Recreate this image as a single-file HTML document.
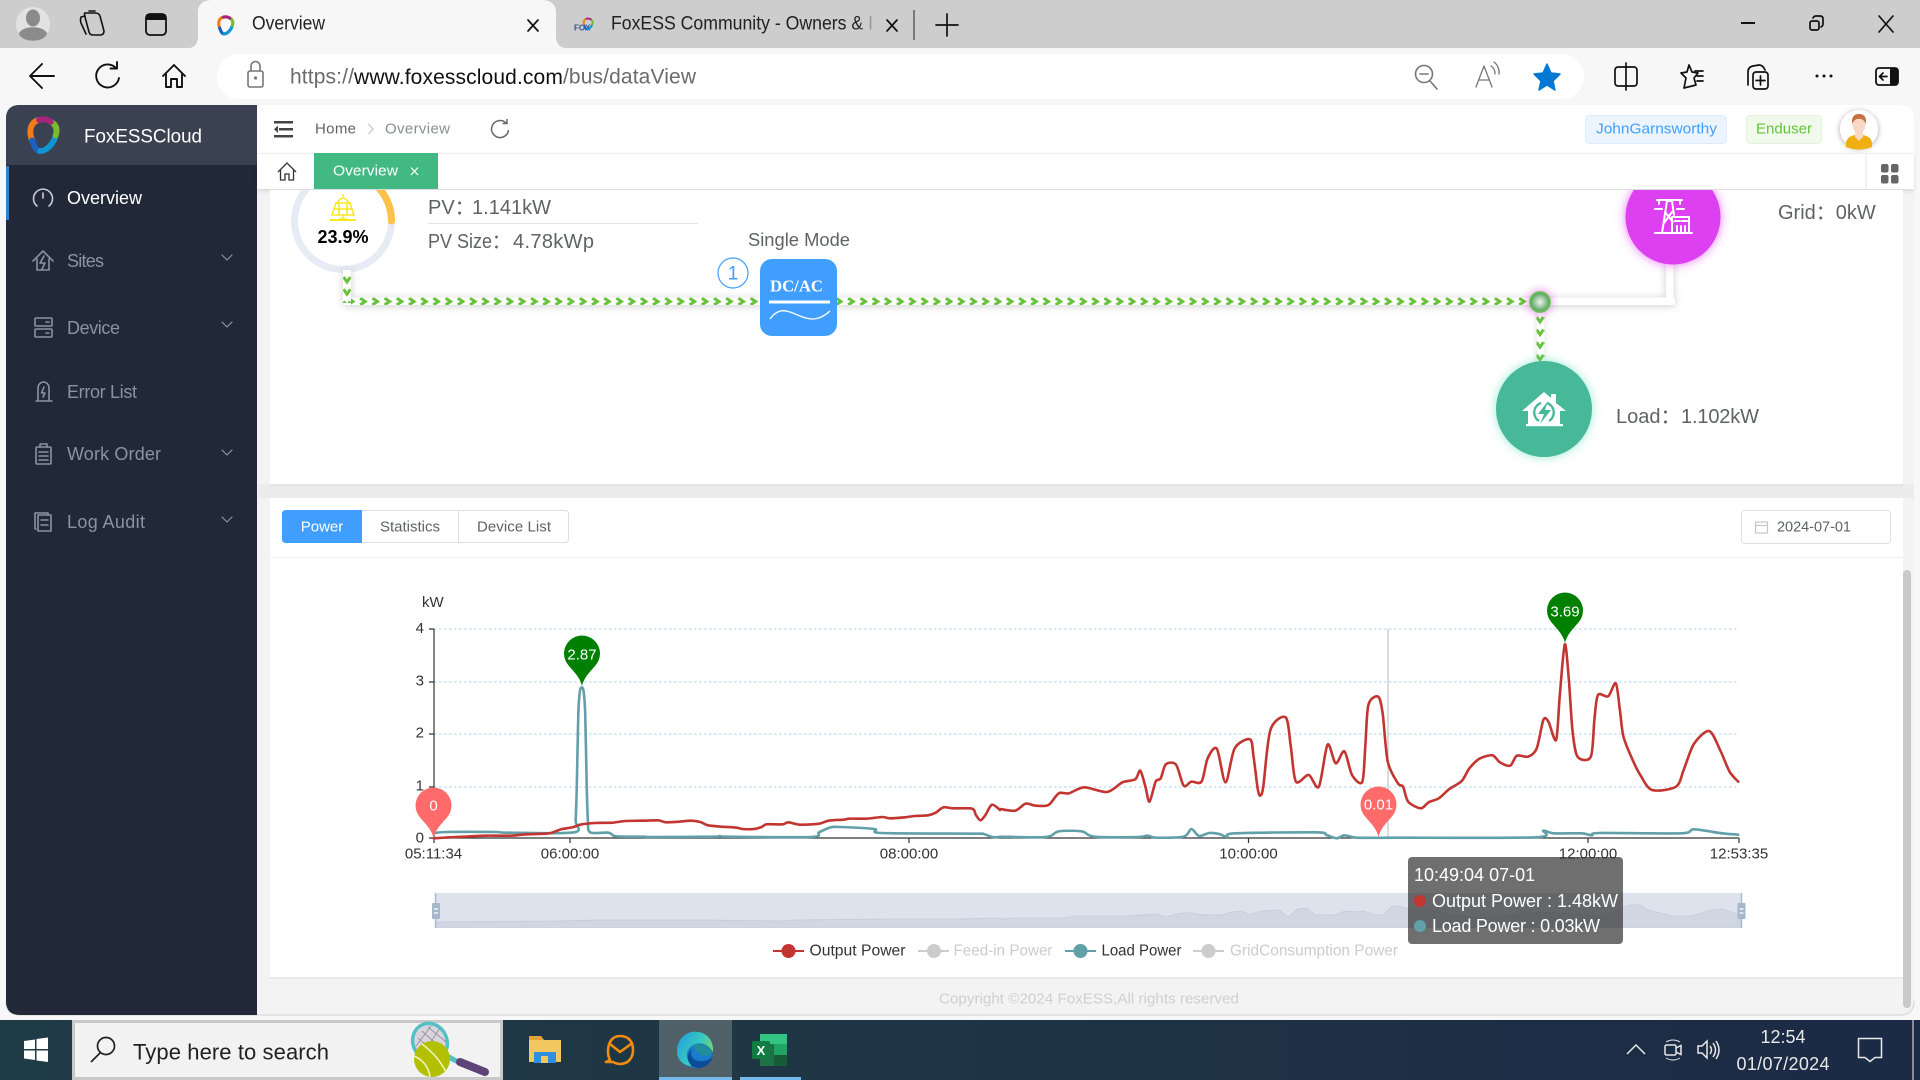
<!DOCTYPE html>
<html lang="en"><head><meta charset="utf-8"><title>Overview</title>
<style>
html,body{margin:0;padding:0;width:1920px;height:1080px;overflow:hidden;background:#f7f7f7}
svg{display:block;position:absolute;left:0;top:0}
text{font-family:"Liberation Sans","Noto Sans CJK SC",sans-serif;dominant-baseline:central;white-space:pre}
.m{fill:#8a93a0;font-size:18px}
.i{fill:none;stroke:#8a93a0;stroke-width:1.6;stroke-linejoin:round;stroke-linecap:round}
.b{fill:none;stroke:#111;stroke-width:1.7;stroke-linejoin:round;stroke-linecap:round}
.g{fill:none;stroke:#777;stroke-width:1.6;stroke-linejoin:round;stroke-linecap:round}
.w{fill:none;stroke:#fff;stroke-width:1.8;stroke-linejoin:round;stroke-linecap:round}
.v{fill:#606266;font-size:20px}
.a{fill:#333;font-size:15px}
.c{fill:none;stroke-linejoin:round;stroke-linecap:round;stroke-width:2.6;vector-effect:non-scaling-stroke}
.t{fill:#fff;font-size:18px}
</style></head><body>
<svg width="1920" height="1080" viewBox="0 0 1920 1080" xmlns="http://www.w3.org/2000/svg">
<defs>
<clipPath id="c1"><rect x="270" y="190" width="1633" height="294"/></clipPath>
<clipPath id="cz"><rect x="436" y="893" width="1305" height="35"/></clipPath>
<pattern id="ph" width="12.2" height="8" patternUnits="userSpaceOnUse" x="345" y="297.5"><path d="M3 .6 L8 4 L3 7.400" fill="none" stroke="#67c23a" stroke-width="3"/></pattern>
<pattern id="pv" width="8" height="12.2" patternUnits="userSpaceOnUse" x="343" y="274"><path d="M.6 3 L4 8 L7.400 3" fill="none" stroke="#67c23a" stroke-width="3"/></pattern>
<pattern id="pv2" width="8" height="12.6" patternUnits="userSpaceOnUse" x="1536" y="314"><path d="M.6 3 L4 8 L7.400 3" fill="none" stroke="#67c23a" stroke-width="3"/></pattern>
<filter id="sh" x="-5%" y="-300%" width="110%" height="700%"><feDropShadow dx="0" dy="1" stdDeviation="4" flood-color="#000" flood-opacity=".2"/></filter>
<filter id="sv" x="-300%" y="-20%" width="700%" height="140%"><feDropShadow dx="0" dy="0" stdDeviation="3" flood-color="#000" flood-opacity=".14"/></filter>
<filter id="sb" x="-5%" y="-100%" width="110%" height="300%"><feDropShadow dx="0" dy="2" stdDeviation="2" flood-color="#000" flood-opacity=".12"/></filter>
<filter id="sa" x="-40%" y="-40%" width="180%" height="180%"><feDropShadow dx="0" dy="1" stdDeviation="3" flood-color="#000" flood-opacity=".35"/></filter>
<filter id="gp" x="-40%" y="-40%" width="180%" height="180%"><feDropShadow dx="0" dy="0" stdDeviation="5" flood-color="#dd3ff0" flood-opacity=".7"/></filter>
<filter id="gg" x="-40%" y="-40%" width="180%" height="180%"><feDropShadow dx="0" dy="0" stdDeviation="5" flood-color="#47d9b0" flood-opacity=".55"/></filter>
<radialGradient id="nd"><stop offset="0" stop-color="#eef6ee"/><stop offset="1" stop-color="#4f9e58"/></radialGradient>
<linearGradient id="fd" x1="0" x2="1"><stop offset="0" stop-color="#cdcdcd" stop-opacity="0"/><stop offset="1" stop-color="#cdcdcd"/></linearGradient>
<linearGradient id="tb" x1="0" x2="1"><stop offset="0" stop-color="#1f3b46"/><stop offset=".45" stop-color="#1f3545"/><stop offset="1" stop-color="#1b2a45"/></linearGradient>
<linearGradient id="eg" x1="0" y1="0" x2="1" y2=".6"><stop offset="0" stop-color="#1d9ddf"/><stop offset=".6" stop-color="#38c8c0"/><stop offset="1" stop-color="#7fdc5a"/></linearGradient>
<symbol id="lg" viewBox="0 0 36 40">
<g fill="none" stroke-width="6" stroke-linecap="round">
<path d="M7 25 C3 16 5 6 14 4" stroke="#ef7d1a"/>
<path d="M15 36 C11 36 9 31 7 25" stroke="#1b5fc0"/>
<path d="M31 20 C29 28 22 36 15 36" stroke="#0f95cf"/>
<path d="M26 6 C32 9 33 14 31 20" stroke="#79bb2c"/>
<path d="M14 4 C18 3 22 3 26 6" stroke="#a8247f"/>
</g></symbol>
<path id="pin" d="M0 0 C-2 -8 -6 -12 -13 -20 A18 18 0 1 1 13 -20 C6 -12 2 -8 0 0Z"/>
</defs>

<!-- browser chrome -->
<rect width="1920" height="48" fill="#cdcdcd"/>
<rect y="48" width="1920" height="972" fill="#f7f7f7"/>
<circle cx="33" cy="24" r="17" fill="#e2e2e2"/>
<ellipse cx="33" cy="18" rx="7" ry="8.5" fill="#8b8b8b"/>
<path d="M19 34 C21 25 45 25 47 34 C43 43 23 43 19 34Z" fill="#8b8b8b"/>
<g class="b" transform="translate(92,24)" style="stroke-width:1.6"><path d="M-7 -11 H3 Q7 -11 8 -8 L12 7 Q12 11 8 11 H1 Q-2 11 -3 8 L-7 -7 Q-8 -11 -7 -11Z"/><path d="M-7 -8 L-11 -7 Q-12 -3 -11 -1 L-6 10"/><path d="M-3 -13 L3 -13"/></g>
<g transform="translate(156,24)"><rect x="-10" y="-10" width="20" height="21" rx="4" fill="none" stroke="#111" stroke-width="1.8"/><rect x="-10" y="-10" width="20" height="6" rx="2" fill="#111"/></g>
<path d="M188 48 C195 48 197 44 198 38 L198 12 C198 4 204 0 212 0 L542 0 C550 0 556 4 556 12 L556 38 C557 44 560 48 566 48 Z" fill="#f7f7f7"/>
<use href="#lg" x="216" y="15" width="19" height="21"/>
<text x="252" y="24" font-size="19" fill="#222" textLength="73" lengthAdjust="spacingAndGlyphs">Overview</text>
<path d="M528 20 L538 31 M538 20 L528 31" class="b"/>
<text x="574" y="28" font-size="8" font-weight="bold" fill="#36578e">FOX</text>
<use href="#lg" x="582" y="15" width="12" height="18"/>
<text x="611" y="24" font-size="19" fill="#222" textLength="262" lengthAdjust="spacingAndGlyphs">FoxESS Community - Owners &amp; I</text>
<rect x="858" y="8" width="18" height="34" fill="url(#fd)"/>
<path d="M887 20 L897 31 M897 20 L887 31" class="b"/>
<path d="M914 10 V40" stroke="#555" stroke-width="1.4"/>
<path d="M947 14 V36 M936 25 H958" class="b"/>
<path d="M1741 23 H1755" stroke="#111" stroke-width="2"/>
<g class="b"><rect x="1810" y="21" width="9" height="9" rx="2"/><path d="M1813 18 Q1814 16 1816 16 H1820 Q1823 16 1823 19 V24 Q1823 26 1821 27"/><path d="M1879 16 L1893 32 M1893 16 L1879 32"/></g>

<!-- toolbar -->
<rect x="217" y="54" width="1367" height="45" rx="22" fill="#fff"/>
<g class="b" style="stroke-width:1.9"><path d="M30 76 H54 M42 64 L30 76 L42 88"/>
<g transform="translate(108,76)"><path d="M8 -8 A11.5 11.5 0 1 0 11 2"/><path d="M9 -14 V-7.5 H2.5"/></g>
<g transform="translate(174,76)"><path d="M-11 0 L0 -11 L11 0 M-8 -2 V11 H-3 V3 H3 V11 H8 V-2"/></g></g>
<g class="g"><rect x="248" y="71" width="15" height="16" rx="2"/><path d="M251 71 V66 A4.5 4.5 0 0 1 260 66 V71"/><circle cx="255.500" cy="78" r=".8"/></g>
<text x="290" y="77" font-size="21" fill="#6b6b6b" textLength="406" lengthAdjust="spacing">https://<tspan fill="#111">www.foxesscloud.com</tspan>/bus/dataView</text>
<g class="g"><circle cx="1424" cy="74" r="8.500"/><path d="M1420 74 H1428 M1430 81 L1437 89"/></g>
<g class="g" style="stroke-width:1.300"><path d="M1476 87 L1484 66 L1492 87 M1479 80 H1489"/><path d="M1491 66 A9 9 0 0 1 1495 74 M1494 62 A13 13 0 0 1 1499 74"/></g>
<path d="M1547 64 L1551 73 L1560 74 L1553 81 L1555 90 L1547 85 L1539 90 L1541 81 L1534 74 L1543 73Z" fill="#0078d4" stroke="#0078d4" stroke-width="1.5" stroke-linejoin="round"/>
<g class="b"><rect x="1615" y="67" width="22" height="19" rx="3"/><path d="M1626 63 V90" /></g>
<g class="b"><path d="M1689 65 L1692 72 L1698 73 L1694 78 L1696 85 L1684 88 L1686 78 L1681 73 L1687 72Z"/><path d="M1695 71 H1703 M1697 76 H1703 M1697 81 H1703"/></g>
<g class="b"><path d="M1748 85 V72 Q1748 67 1753 66 L1759 65 Q1763 65 1765 70"/><rect x="1753" y="72" width="15" height="17" rx="3"/><path d="M1760.500 76 V85 M1756 80.500 H1765"/></g>
<g fill="#111"><circle cx="1817" cy="76" r="1.500"/><circle cx="1824" cy="76" r="1.500"/><circle cx="1831" cy="76" r="1.500"/></g>
<g><rect x="1876" y="68" width="22" height="17" rx="3" fill="none" stroke="#111" stroke-width="1.800"/><rect x="1890" y="68" width="8" height="17" rx="2" fill="#111"/><path d="M1887 76.500 H1880 M1883 73 L1879.500 76.500 L1883 80" class="b"/></g>

<!-- app shell -->
<rect x="6" y="105" width="1908" height="910" rx="14" fill="#f3f3f3"/>
<path d="M6 119 Q6 105 20 105 H1900 Q1914 105 1914 119 V153 H6Z" fill="#fff"/>
<path d="M1914 1001 Q1914 1015 1900 1015 H20 Q6 1015 6 1001" fill="none" stroke="#dedede" stroke-width="1.500"/>

<!-- sidebar -->
<path d="M6 119 Q6 105 20 105 H257 V1015 H20 Q6 1015 6 1001Z" fill="#212938"/>
<path d="M6 119 Q6 105 20 105 H257 V165 H6Z" fill="#3a4150"/>
<use href="#lg" x="24" y="116" width="38" height="39"/>
<text x="84" y="137" font-size="19" fill="#fff" textLength="118" lengthAdjust="spacingAndGlyphs">FoxESSCloud</text>
<rect x="6" y="166" width="3" height="54" fill="#2f80d0"/>
<text x="67" y="198" font-size="18" fill="#fff" textLength="75">Overview</text>
<text x="67" y="261" class="m" textLength="37">Sites</text>
<text x="67" y="328" class="m" textLength="53">Device</text>
<text x="67" y="392" class="m" textLength="70">Error List</text>
<text x="67" y="454" class="m" textLength="94">Work Order</text>
<text x="67" y="522" class="m" textLength="78">Log Audit</text>
<g class="i" style="stroke:#c9ced6"><path d="M37 206 A9.500 9.500 0 1 1 49 206"/><path d="M43 193 V198"/></g>
<g class="i"><path d="M33 261 L43 251 L53 261 M37 259 V270 H49 V259"/><path d="M44 256 L40 263 H45 L42 269"/></g>
<g class="i"><rect x="35" y="318" width="17" height="8" rx="1"/><rect x="35" y="329" width="17" height="8" rx="1"/><path d="M46 322 H49 M46 333 H49"/></g>
<g class="i"><path d="M38 400 V388 A5.500 6 0 0 1 49 388 V400 M36 401 H52"/><path d="M44 387 L41.500 393 H45 L43 397"/></g>
<g class="i"><rect x="36" y="447" width="15" height="17" rx="1"/><path d="M40 447 V444 H47 V447 M39 452 H48 M39 456 H48 M39 460 H48"/></g>
<g class="i"><rect x="38" y="515" width="13" height="16"/><path d="M36 529 H35 V513 H48 V515 M41 520 H48 M41 525 H48"/></g>
<g class="i" style="stroke-width:1.200"><path d="M222 255 L227 260 L232 255"/><path d="M222 322 L227 327 L232 322"/><path d="M222 450 L227 455 L232 450"/><path d="M222 517 L227 522 L232 517"/></g>

<!-- header -->
<g fill="#444"><rect x="274" y="121" width="19" height="2.500"/><rect x="279" y="128" width="14" height="2.500"/><rect x="274" y="135" width="19" height="2.500"/><path d="M278 125.500 L274 129.200 L278 133Z"/></g>
<text x="315" y="129" font-size="15" fill="#606266" textLength="41">Home</text>
<path d="M368.500 124 L373 129 L368.500 134" fill="none" stroke="#c0c4cc" stroke-width="1.200"/>
<text x="385" y="129" font-size="15" fill="#8a8d92" textLength="65">Overview</text>
<g fill="none" stroke="#666" stroke-width="1.500" transform="translate(500,129)"><path d="M6 -6 A8.500 8.500 0 1 0 8.500 1"/><path d="M7 -10 V-5.500 H2.500"/></g>
<rect x="1585.500" y="115.500" width="141" height="28" rx="4" fill="#ecf5ff" stroke="#d9ecff"/>
<text x="1596" y="129" font-size="15" fill="#409eff" textLength="121" lengthAdjust="spacingAndGlyphs">JohnGarnsworthy</text>
<rect x="1746.500" y="115.500" width="75" height="28" rx="4" fill="#f0f9eb" stroke="#e1f3d8"/>
<text x="1756" y="129" font-size="15" fill="#67c23a" textLength="56" lengthAdjust="spacingAndGlyphs">Enduser</text>
<circle cx="1859" cy="129" r="19" fill="#fff" filter="url(#sa)"/>
<path d="M1846 147 V142 Q1848 136 1855 135 H1863 Q1870 136 1872 142 V147 Q1859 152 1846 147Z" fill="#f1b011"/>
<path d="M1855 131 H1863 V137 L1859 141 L1855 137Z" fill="#f7d9c4"/>
<ellipse cx="1859" cy="125" rx="6.500" ry="8" fill="#f8d8c4"/>
<path d="M1852 124 Q1851 114 1859 114 Q1867 114 1866 124 Q1863 118 1859 119 Q1855 118 1852 124Z" fill="#c4713f"/>

<!-- tabs row -->
<rect x="257" y="153" width="1657" height="36" fill="#fff" filter="url(#sb)"/>
<rect x="257" y="153" width="1657" height="1" fill="#eeeeee"/>
<g fill="none" stroke="#333" stroke-width="1.300" transform="translate(287,172)"><path d="M-9 0 L0 -9 L9 0 M-6.500 -2 V8 H-2 V2 H2 V8 H6.500 V-2"/></g>
<rect x="314" y="153" width="124" height="36" fill="#42b983"/>
<text x="333" y="171" font-size="15" fill="#fff" textLength="65" lengthAdjust="spacingAndGlyphs">Overview</text>
<path d="M411 167.500 L418 175 M418 167.500 L411 175" stroke="#fff" stroke-width="1.200"/>
<path d="M1866 153 V189" stroke="#e6e6e6"/>
<g fill="#666"><rect x="1881" y="164" width="7.500" height="8.500" rx="2"/><rect x="1891" y="164" width="7.500" height="8.500" rx="2"/><rect x="1881" y="175" width="7.500" height="8.500" rx="2"/><rect x="1891" y="175" width="7.500" height="8.500" rx="2"/></g>

<!-- card 1 -->
<rect x="258" y="484" width="1656" height="14" fill="#ececec"/>
<rect x="270" y="190" width="1633" height="294" fill="#fff"/>
<rect x="270" y="484" width="1633" height="3" fill="#e6e6e6"/>
<g clip-path="url(#c1)">
<circle cx="343" cy="221" r="48.500" fill="none" stroke="#e6ebf5" stroke-width="7"/>
<path d="M364 177 A48.500 48.500 0 0 1 391.500 221" fill="none" stroke="#fdc14a" stroke-width="7" stroke-linecap="round"/>
<g fill="none" stroke="#f7e400" stroke-width="1.300"><path d="M332 215 L336 203 H350 L354 215Z"/><path d="M333.500 209 H352.500 M339 203 V215 M347 203 V215 M337 203 Q343 193 349 203"/><path d="M343 215 V219 M339 219 H347"/><path d="M330 220 H356" stroke-width="1.800"/><path d="M343 194 V197"/></g>
<text x="343" y="237" font-size="18" font-weight="bold" fill="#000" text-anchor="middle">23.9%</text>
<text x="428" y="208" class="v">PV：</text><text x="472" y="208" class="v" textLength="79">1.141kW</text>
<path d="M428 223.500 H698" stroke="#e4e4e4" stroke-width="1.300"/>
<text x="428" y="242" class="v" textLength="82" lengthAdjust="spacingAndGlyphs">PV Size：</text><text x="513" y="242" class="v" textLength="81">4.78kWp</text>
<text x="748" y="240" font-size="18" fill="#606266" textLength="102" lengthAdjust="spacingAndGlyphs">Single Mode</text>

<!-- pipes -->
<g filter="url(#sh)"><rect x="343" y="297.500" width="420" height="7.500" fill="#fff"/><rect x="343" y="270" width="8" height="35" fill="#fff"/><rect x="835" y="297.500" width="840" height="7.500" fill="#fff" rx="2"/><rect x="1666" y="262" width="7.500" height="43" fill="#fff" rx="2"/></g>
<rect x="351" y="297.500" width="410" height="7.500" fill="url(#ph)"/>
<rect x="837" y="297.500" width="693" height="7.500" fill="url(#ph)"/>
<rect x="343" y="274" width="8" height="29" fill="url(#pv)"/>
<rect x="1537" y="310" width="7.500" height="54" fill="#fff" filter="url(#sv)"/>
<rect x="1536.500" y="314" width="8" height="50" fill="url(#pv2)"/>
<circle cx="1540" cy="302" r="10" fill="url(#nd)" stroke="#6abf4b" stroke-width="1.800" filter="url(#gp)"/>

<circle cx="733" cy="273" r="15" fill="#fff" stroke="#409eff" stroke-width="1.200"/>
<text x="733" y="274" font-size="19" fill="#409eff" text-anchor="middle">1</text>
<rect x="760" y="259" width="77" height="77" rx="12" fill="#409eff"/>
<text x="770" y="286" font-size="17" font-weight="bold" fill="#fff" textLength="53" lengthAdjust="spacingAndGlyphs" style="font-family:'Liberation Serif',serif">DC/AC</text>
<rect x="769" y="300.500" width="61" height="3" fill="#fff"/>
<path d="M770 319 C780 305 790 312 800 316 C812 321 820 320 830 311" fill="none" stroke="#fff" stroke-width="1.300"/>

<circle cx="1673" cy="217" r="47.500" fill="#dd3ff0" filter="url(#gp)"/>
<g class="w" style="stroke-width:2"><path d="M1655 233 H1692"/><path d="M1662 233 L1667 201 H1672 L1674 215"/><path d="M1657 200 H1682 M1659 200 V204 M1680 200 V204 M1655 209 H1662 M1677 209 H1684 M1664 223 L1672 212 M1665 212 L1673 222"/><rect x="1672" y="217" width="17" height="16"/><path d="M1675 221 H1680 M1682 221 H1687 M1677 226 V233 M1681 226 V233 M1685 226 V233"/></g>
<text x="1778" y="213" class="v">Grid：0kW</text>

<circle cx="1544" cy="409" r="48" fill="#47b999" filter="url(#gg)"/>
<path d="M1528 425 V411 H1522 L1544 392 L1551 398 V394 H1556 V403 L1566 411 H1560 V425Z" fill="#fff"/>
<rect x="1526" y="424" width="37" height="2.200" fill="#fff"/>
<path d="M1541 403 A10 10 0 0 0 1539 421 M1547 403 A10 10 0 0 1 1549 421" fill="none" stroke="#47b999" stroke-width="2.300"/>
<path d="M1548 401 L1538 414 H1544 L1540 424 L1551 410 H1545Z" fill="#47b999"/>
<text x="1616" y="417" class="v">Load：</text><text x="1681" y="417" class="v" textLength="78">1.102kW</text>
</g>

<!-- card 2 -->
<rect x="270" y="498" width="1633" height="479" fill="#fff"/>
<rect x="270" y="557" width="1633" height="1" fill="#efefef"/>
<path d="M286 510 H362 V543 H286 Q282 543 282 539 V514 Q282 510 286 510Z" fill="#409eff"/>
<text x="322" y="527" font-size="15" fill="#fff" text-anchor="middle">Power</text>
<path d="M362 510.500 H565 Q568.500 510.500 568.500 514 V539 Q568.500 542.500 565 542.500 H362" fill="#fff" stroke="#dcdfe6"/>
<path d="M458.500 510 V543" stroke="#dcdfe6"/>
<text x="380" y="527" font-size="15" fill="#606266" textLength="60">Statistics</text>
<text x="477" y="527" font-size="15" fill="#606266" textLength="74">Device List</text>
<rect x="1741.500" y="510.500" width="149" height="33" rx="3" fill="#fff" stroke="#dcdfe6"/>
<g fill="none" stroke="#c0c4cc" stroke-width="1.200"><rect x="1755.500" y="522" width="12" height="11"/><path d="M1755.500 525.500 H1767.500"/></g>
<text x="1777" y="527.500" font-size="14.500" fill="#606266" textLength="74">2024-07-01</text>

<!-- chart -->
<g stroke="#bcdcf5" stroke-width="1.300" stroke-dasharray="2.500 2.500"><path d="M434 629 H1739 M434 682 H1739 M434 734 H1739 M434 787 H1739"/></g>
<path d="M1388 629 V838" stroke="#c4c4c4" stroke-width="1.200"/>
<g stroke="#333" stroke-width="1.200" fill="none"><path d="M434 629 V838 H1739"/><path d="M429 629 H434 M429 682 H434 M429 734 H434 M429 787 H434 M429 838 H434"/><path d="M434 838 V843 M570 838 V843 M909 838 V843 M1248.500 838 V843 M1588 838 V843 M1739 838 V843"/></g>
<g class="a"><text x="422" y="602.500" class="a">kW</text>
<text x="424" y="628.500" class="a" text-anchor="end">4</text><text x="424" y="681" class="a" text-anchor="end">3</text><text x="424" y="733" class="a" text-anchor="end">2</text><text x="424" y="786" class="a" text-anchor="end">1</text><text x="424" y="838" class="a" text-anchor="end">0</text>
<text x="433.500" y="854" class="a" text-anchor="middle">05:11:34</text><text x="570" y="854" class="a" text-anchor="middle">06:00:00</text><text x="909" y="854" class="a" text-anchor="middle">08:00:00</text><text x="1248.500" y="854" class="a" text-anchor="middle">10:00:00</text><text x="1588" y="854" class="a" text-anchor="middle">12:00:00</text><text x="1739" y="854" class="a" text-anchor="middle">12:53:35</text></g>

<g transform="translate(400,580) scale(0.38265,0.33333)">
<polyline class="c" stroke="#61a0a8" points="88,760 120,756 250,756 280,758 455,757 459,720 462,620 466,400 470,335 475,322 480,335 484,400 488,620 491,720 497,757 545,758 565,769 640,770 650,771 820,770 835,768 860,770 1075,771 1095,757 1125,742 1150,741 1240,747 1258,759 1500,761 1525,762 1548,771 1568,771"/>
<polyline class="c" stroke="#c23531" points="88,775 130,772 170,770 220,767 290,767 330,763 390,760 420,748 450,742 475,733 510,729 555,728 590,723 640,722 675,721 695,727 730,725 760,722 785,726 805,736 840,740 880,743 895,747 925,747 945,741 958,733 1000,733 1015,727 1045,734 1095,731 1120,722 1160,719 1175,716 1220,716 1260,711 1280,715 1320,712 1345,708 1380,706 1400,698 1420,682 1445,685 1495,686 1505,705 1517,721 1530,705 1547,674 1568,690"/>
</g>
<g transform="translate(1000,580) scale(0.51020,0.33333)">
<polyline class="c" stroke="#61a0a8" points="0,770 90,771 115,754 160,754 185,770 270,771 290,767 305,773 360,770 375,747 390,768 410,759 430,762 445,771 460,760 620,757 640,765 660,775 675,766 700,773 780,773 1050,772 1065,752 1085,760 1140,760 1160,766 1175,759 1335,760 1360,748 1415,760 1447,764"/>
<polyline class="c" stroke="#c23531" points="0,687 30,692 50,671 70,677 95,675 115,640 135,640 165,622 210,636 240,607 265,598 275,572 285,620 293,665 305,605 315,595 325,553 345,554 360,617 375,605 395,605 407,535 425,506 442,607 460,505 490,478 497,530 505,625 510,647 516,620 530,450 560,412 570,500 580,605 605,585 625,620 642,494 658,550 675,514 690,585 710,606 716,500 722,375 741,350 750,400 760,545 780,610 790,620 800,665 825,685 840,667 860,655 880,628 905,603 920,565 940,536 965,526 980,547 1000,557 1013,527 1035,530 1052,505 1065,420 1075,425 1090,480 1097,350 1107,193 1115,300 1122,450 1132,530 1158,530 1165,420 1172,345 1192,349 1207,310 1215,390 1222,470 1240,540 1255,585 1278,630 1325,620 1340,570 1360,492 1390,453 1412,512 1430,575 1447,605"/>
</g>

<g transform="translate(582,686)"><use href="#pin" fill="#008000"/><text x="0" y="-31" font-size="15" fill="#fff" text-anchor="middle">2.87</text></g>
<g transform="translate(1565,643)"><use href="#pin" fill="#008000"/><text x="0" y="-31" font-size="15" fill="#fff" text-anchor="middle">3.69</text></g>
<g transform="translate(433.500,838)"><use href="#pin" fill="#ff6b6b"/><text x="0" y="-32" font-size="15" fill="#fff" text-anchor="middle">0</text></g>
<g transform="translate(1378.500,837)"><use href="#pin" fill="#ff6b6b"/><text x="0" y="-32" font-size="15" fill="#fff" text-anchor="middle">0.01</text></g>

<!-- data zoom -->
<rect x="435" y="893" width="1306" height="35" fill="#dde2ec"/>
<g clip-path="url(#cz)"><polyline fill="#d0d7e2" stroke="#c3cbd8" stroke-width=".8" points="435,922 559,921 598,920 706,920 783,921 795,920 885,919 961,919 993,918 1003,919 1012,918 1063,918 1076,916 1127,916 1156,914 1165,917 1181,913 1191,913 1204,915 1222,915 1232,912 1242,911 1249,915 1261,911 1279,910 1288,917 1298,909 1307,908 1315,915 1335,915 1345,911 1355,912 1364,911 1374,915 1384,915 1392,906 1400,906 1405,908 1420,908 1450,915 1490,918 1540,912 1600,916 1630,905 1640,905 1648,910 1672,916 1692,916 1712,910 1722,909 1741,915 1741,928 435,928"/></g>
<path d="M435.500 893 V928 M1741.500 893 V928" stroke="#a7b7cc" stroke-width="1.400"/>
<g><rect x="432" y="903" width="8" height="16" rx="1" fill="#a7b7cc"/><rect x="1737.500" y="903" width="8" height="16" rx="1" fill="#a7b7cc"/><path d="M434 909 H438 M434 913 H438 M1739.500 909 H1743.500 M1739.500 913 H1743.500" stroke="#fff" stroke-width="1.200"/></g>

<!-- legend -->
<path d="M773 951 H804" stroke="#c23531" stroke-width="2"/><circle cx="788.500" cy="951" r="7" fill="#c23531"/>
<text x="809.500" y="951" font-size="15.500" fill="#333" textLength="96" lengthAdjust="spacingAndGlyphs">Output Power</text>
<path d="M918 951 H949" stroke="#ccc" stroke-width="2"/><circle cx="934" cy="951" r="7" fill="#ccc"/>
<text x="953.500" y="951" font-size="15.500" fill="#ccc" textLength="99" lengthAdjust="spacingAndGlyphs">Feed-in Power</text>
<path d="M1065 951 H1096" stroke="#61a0a8" stroke-width="2"/><circle cx="1080.500" cy="951" r="7" fill="#61a0a8"/>
<text x="1101.500" y="951" font-size="15.500" fill="#333" textLength="80" lengthAdjust="spacingAndGlyphs">Load Power</text>
<path d="M1193 951 H1224" stroke="#ccc" stroke-width="2"/><circle cx="1208.500" cy="951" r="7" fill="#ccc"/>
<text x="1230" y="951" font-size="15.500" fill="#ccc" textLength="168" lengthAdjust="spacingAndGlyphs">GridConsumption Power</text>

<!-- tooltip -->
<rect x="1408" y="857" width="215" height="87" rx="4" fill="#323232" fill-opacity=".7"/>
<text x="1414" y="875" class="t">10:49:04 07-01</text>
<circle cx="1420" cy="901" r="6" fill="#c23531"/><text x="1432" y="901" class="t" textLength="186">Output Power : 1.48kW</text>
<circle cx="1420" cy="926" r="6" fill="#61a0a8"/><text x="1432" y="926" class="t" textLength="168">Load Power : 0.03kW</text>

<rect x="270" y="977" width="1633" height="2" fill="#e8e8e8"/>
<text x="939" y="999" font-size="15" fill="#cfcfcf" textLength="300" lengthAdjust="spacingAndGlyphs">Copyright ©2024 FoxESS,All rights reserved</text>
<rect x="1903" y="570" width="8" height="438" rx="4" fill="#c9c9c9"/>

<!-- taskbar -->
<rect y="1020" width="1920" height="60" fill="url(#tb)"/>
<g fill="#fff"><path d="M24 1041 L35 1039.500 V1049 H24Z M36.500 1039 L48 1037.500 V1049 H36.500Z M24 1050.500 H35 V1060 L24 1058.500Z M36.500 1050.500 H48 V1062 L36.500 1060.500Z"/></g>
<rect x="73.500" y="1021.500" width="428" height="57" fill="#f2f2f2" stroke="#c8c8c8" stroke-width="3"/>
<g fill="none" stroke="#222" stroke-width="1.700"><circle cx="106" cy="1046" r="8.500"/><path d="M100 1053 L91 1062"/></g>
<text x="133" y="1052" font-size="22" fill="#222" textLength="196">Type here to search</text>
<ellipse cx="430" cy="1042" rx="17" ry="19" transform="rotate(-25 430 1042)" fill="#d9d5dc" stroke="#55bfc6" stroke-width="3.500"/>
<path d="M422 1031 L442 1049 M428 1027 L446 1042 M418 1038 L436 1054 M440 1028 L424 1052 M431 1026 L416 1046" stroke="#9a92a2" stroke-width="1"/>
<path d="M447 1056 L460 1063" stroke="#55bfc6" stroke-width="5"/>
<path d="M460 1062 L485 1072" stroke="#5d4478" stroke-width="8" stroke-linecap="round"/>
<circle cx="432" cy="1059" r="18" fill="#b3c000"/>
<path d="M422 1044 Q438 1056 446 1072 M414 1056 Q428 1062 430 1077" fill="none" stroke="#eef2c0" stroke-width="1.600"/>

<path d="M529 1036 H541 L544 1040 H561 V1062 H529Z" fill="#f3c75f"/><path d="M529 1036 H541 L544 1040 H529Z" fill="#e0a23a"/>
<rect x="534" y="1052" width="22" height="11" fill="#2f8fe0"/><rect x="541" y="1056" width="7" height="7" fill="#f3c75f"/>
<g fill="none" stroke="#f28c0f" stroke-width="2.600" stroke-linejoin="round"><path d="M620 1036 C611 1036 608 1044 608 1052 C608 1056 609 1058 610 1060 L606 1062 L613 1062 C615 1063 618 1064 620 1064 C629 1064 633 1057 633 1050 C633 1042 629 1036 620 1036Z"/><path d="M610 1044 L620 1052 L631 1044"/></g>
<rect x="659" y="1020" width="73" height="60" fill="#4f6068"/>
<rect x="659" y="1077" width="73" height="3" fill="#76b9ed"/>
<rect x="740" y="1077" width="61" height="3" fill="#76b9ed"/>
<circle cx="695" cy="1050" r="18" fill="#1a7ccc"/>
<path d="M677 1052 C677 1036 690 1030 698 1032 C708 1033 714 1042 713 1052 C708 1044 700 1041 693 1045 C686 1049 684 1058 692 1066 C684 1066 677 1060 677 1052Z" fill="url(#eg)"/>
<path d="M693 1045 C699 1042 707 1045 712 1052 C711 1055 705 1057 701 1055 C697 1053 695 1049 693 1045Z" fill="#1f8f9a"/>
<path d="M692 1066 C700 1071 710 1066 713 1056 C708 1062 700 1062 695 1060 C691 1057 690 1053 692 1049 C686 1054 687 1062 692 1066Z" fill="#0c4d9b"/>
<path d="M760 1034 H787 V1066 H760Z" fill="#1f7145"/><path d="M760 1034 H787 V1044 H760Z" fill="#33c481"/><path d="M774 1044 H787 V1055 H774Z" fill="#21a366"/><path d="M774 1055 H787 V1066 H774Z" fill="#185c37"/>
<rect x="752" y="1041" width="18" height="18" rx="2" fill="#107c41"/>
<text x="761" y="1050.500" font-size="13" font-weight="bold" fill="#fff" text-anchor="middle">X</text>

<g fill="none" stroke="#e8e8e8" stroke-width="1.500"><path d="M1627 1054 L1636 1045 L1645 1054"/>
<rect x="1665" y="1045" width="11" height="10" rx="1.500"/><path d="M1676 1048 L1681 1045.500 V1054.500 L1676 1052"/><path d="M1666 1042 Q1673 1038 1680 1042 M1666 1058 Q1673 1062 1680 1058" stroke-width="1"/>
<path d="M1698 1046 H1702 L1707 1041 V1058 L1702 1053 H1698Z"/><path d="M1710 1046 Q1713 1050 1710 1054 M1713 1043 Q1718 1050 1713 1057 M1716 1041 Q1722 1050 1716 1059"/>
<path d="M1858.500 1038.500 H1881.500 V1057.500 H1875 L1870 1061.500 L1865 1057.500 H1858.500Z"/></g>
<text x="1783" y="1037" font-size="18" fill="#e8e8e8" text-anchor="middle">12:54</text>
<text x="1783" y="1064" font-size="18" fill="#e8e8e8" text-anchor="middle" textLength="93">01/07/2024</text>
<rect x="1912" y="1020" width="2" height="60" fill="#8a8a95"/>
</svg>
<script>
document.querySelectorAll('polyline.c').forEach(function(l){
  var p=l.getAttribute('points').trim().split(/\s+/).map(function(s){return s.split(',').map(Number)});
  var d='M'+p[0][0]+' '+p[0][1],k=1/7;
  for(var i=0;i<p.length-1;i++){
    var a=p[i-1]||p[i],b=p[i],c=p[i+1],e=p[i+2]||c;
    d+=' C'+(b[0]+(c[0]-a[0])*k)+' '+(b[1]+(c[1]-a[1])*k)+' '+(c[0]-(e[0]-b[0])*k)+' '+(c[1]-(e[1]-b[1])*k)+' '+c[0]+' '+c[1];
  }
  var n=document.createElementNS('http://www.w3.org/2000/svg','path');
  n.setAttribute('d',d);n.setAttribute('class','c');n.setAttribute('stroke',l.getAttribute('stroke'));
  l.parentNode.replaceChild(n,l);
});
</script>
</body></html>
